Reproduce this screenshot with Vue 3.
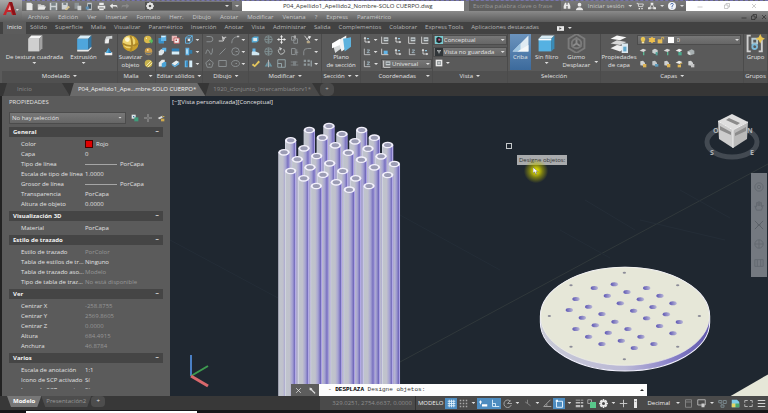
<script setup>
import { h, ref } from 'vue'

/* Icon shapes on a 12 x 12 grid: [path, fill, stroke] */
const W = '#e9e9e9'
const B = '#62b5e8'
const D = '#2f7fb5'
const G = '#8f9496'
const Y = '#e8c553'
const shapes = {
  file: [['M2 1H8L10 3V11H2Z', W]],
  open: [['M1 3H5L6 4H10V10H1Z', '#cfcfcf'], ['M3 6H12L10 10H1Z', W]],
  save: [['M1 1H11V11H1Z', '#cfd3d6'], ['M3 1H9V5H3Z M3 7H9V11H3Z', '#7c8488']],
  saveas: [['M1 1H9V10H1Z', '#cfd3d6'], ['M3 1H7V4H3Z', '#7c8488'], ['M5 10L10 5L12 7L7 11Z', '#d6c48e']],
  cloud: [['M2 1H8V9H2Z', '#8d9397'], ['M6 5H11V11H6Z', '#d0d4d6']],
  publish: [['M3 1H9V11H3Z', '#c4c9cc'], ['M4 3H8V9H4Z', '#4d5b66'], ['M1 6H5V10H1Z', '#5d8fb4']],
  plot: [['M3 1H9V4H3Z M1 5H11V9H1Z M3 9H9V11H3Z', W], ['M3 8H9', 'none', '#666']],
  undo: [['M5 2L1 5L5 9V6H9Q11 6 11 9V5Q11 4 9 4H5Z', W]],
  redo: [['M7 2L11 5L7 9V6H3Q1 6 1 9V5Q1 4 3 4H7Z', '#8a8a8a']],
  gear: [['M5 0H7V2L9 1L11 3L10 5H12V7H10L11 9L9 11L7 10V12H5V10L3 11L1 9L2 7H0V5H2L1 3L3 1L5 2Z M6 4A2 2 0 1 0 6 8A2 2 0 1 0 6 4Z', W]],
  cubeWhite: [['M2 3L4 1H11L9 3Z', '#f4f4f4'], ['M2 3H9V11H2Z', '#cfcfcf'], ['M9 3L11 1V9L9 11Z', '#a2a2a2']],
  cubeBlue: [['M2 3L4 1H11L9 3Z', '#d9edf7'], ['M2 3H9V10H2Z', '#4fa6dc'], ['M9 3L11 1V8L9 10Z', '#2f76a5'], ['M2 10H9L11 8V9L9 11H2Z', W]],
  page: [['M3 2L11 1V5H7L6 11H1V7Z', '#cfd2d3'], ['M3 6L7 5L6 11H1Z', '#eee']],
  pull: [['M1 7H11V11H1Z', '#eee'], ['M2 8L6 1L10 8Z', '#55b3e2'], ['M6 1L10 8H6Z', D]],
  ball: [['M6 1A5 5 0 1 0 6 11A5 5 0 1 0 6 1Z', '#c99f2c'], ['M5 1A4 4 0 1 0 5 9A4 4 0 1 0 5 1Z', '#eed46f'], ['M1 6Q6 9 11 6M6 1Q8 6 6 11', 'none', '#ad882a'], ['M4 2A1 1 0 1 0 4 5A1 1 0 1 0 4 2Z', '#fff7cf']],
  ballPlus: [['M5 1A5 5 0 1 0 5 11A5 5 0 1 0 5 1Z', '#d9b94b'], ['M3 3A1 1 0 1 0 4 5Z', '#fff7cf'], ['M7 7H9V5H11V7H12V9H11V11H9V9H7Z', '#55b95d']],
  ballMinus: [['M6 1A5 5 0 1 0 6 11A5 5 0 1 0 6 1Z', '#c99b4a'], ['M1 7Q6 9 11 7L9 10H3Z', '#6f7678'], ['M4 3H6V5H4Z', '#fff0bb']],
  ballSlash: [['M6 1A5 5 0 1 0 6 11A5 5 0 1 0 6 1Z', '#c9b44e'], ['M3 9L9 3M5 11L11 5', 'none', '#f8efbe']],
  union: [['M4 1H11V8H8V11H1V4H4Z', B], ['M4 1H11L9 3H5Z', '#d6effb'], ['M1 4H4V8H8V11H1Z', '#398fc5']],
  subtract: [['M1 1H8V8H1Z', '#e7b6b6'], ['M4 4H11V11H4Z', '#f1f1f1', '#c15a5a'], ['M6 6H8V8H6Z', '#b44']],
  intersect: [['M2 4L5 1H11V8L8 11H2Z', 'none', B], ['M2 4H8V11M8 4L11 1', 'none', B], ['M5 5H8V8H5Z', W]],
  slice: [['M1 6L4 3H8V8L5 11H1Z', '#dfe5e8'], ['M6 1H11V6H8V4H5Z', B]],
  thick: [['M1 2H11V6H1Z', D], ['M1 6H11V10H1Z', '#d7edf7']],
  extract: [['M2 1H7V11H2Z', B], ['M7 4H11V9H7Z', '#337daa'], ['M3 3H5V9H3Z', '#c8e9f8']],
  offset: [['M1 5L5 1H9V6L5 10H1Z', '#e6e8e8'], ['M5 6L8 4H11V9L9 11H5Z', '#4aa3d6']],
  disc: [['M1 6L7 2L11 4L5 9Z', '#e8eff2'], ['M1 6L5 9L11 4V7L5 11L1 8Z', B]],
  split: [['M1 2H5V11H1Z', B], ['M7 2H11V11H7Z', '#d6edf8'], ['M3 3H5V10H3Z', D]],
  pline: [['M2 2H7A3 3 0 0 1 7 9H2', 'none', G]],
  polysolid: [['M1 8H7L9 3H11', 'none', '#d8d8d8'], ['M5 1L9 4L6 7Z', '#c6c6c6']],
  arc: [['M1 11Q1 3 9 2', 'none', G], ['M8 1H11V3H8Z', '#c6c6c6']],
  spline: [['M1 9Q3 1 5 5T8 10Q10 9 10 2', 'none', G]],
  line: [['M2 10L10 2', 'none', G]],
  circle: [['M6 1A5 5 0 1 0 6 11A5 5 0 1 0 6 1ZM6 6H9', 'none', G]],
  polygon: [['M6 1L11 5L9 11H3L1 5Z', 'none', G], ['M5 6H7V8H5Z', G]],
  rect: [['M1 2H11V10H1Z', 'none', G]],
  ellipse: [['M6 2C-1 2-1 10 6 10S13 2 6 2M6 6H8', 'none', G]],
  gizmoMove: [['M1 4L4 2H10V8L7 10H1Z', '#58acd6'], ['M3 4H8V8H3Z', '#dbe7ec']],
  align: [['M1 7Q3 3 6 6L11 8V11H1Z', '#d1e6f0'], ['M2 2H6V6H2Z', B]],
  sweep: [['M1 8L3 6L5 8L10 2L12 4L5 11Z', '#e4c65c']],
  orbit: [['M6 1A5 5 0 1 0 6 11A5 5 0 1 0 6 1ZM1 6H11M6 1V11M3 3Q6 6 9 3M3 9Q6 6 9 9', 'none', '#7e8d90']],
  move: [['M6 1V11M1 6H11', 'none', W], ['M6 0L8 3H4ZM6 12L8 9H4ZM0 6L3 4V8ZM12 6L9 4V8Z', W]],
  copy: [['M2 2H7V7H2ZM5 5H10V11H5Z', 'none', G], ['M8 1A2 2 0 1 0 8 4Z', '#aaa']],
  trim: [['M2 1L9 10M4 6L9 2', 'none', '#d0d0d0'], ['M7 1L11 2L8 6Z', W], ['M5 8H9V11H5Z', '#b8a886']],
  rotate: [['M9 3A4 4 0 1 1 4 2', 'none', '#c6c9ca'], ['M3 0L7 2L4 5Z', '#c6c9ca']],
  stretch: [['M2 2H7V10H2ZM7 7H11M9 3V11', 'none', G]],
  fillet: [['M1 11V6Q1 2 6 2H11', 'none', G]],
  mirror: [['M1 10L5 3V10ZM7 3L11 10H7Z', '#6b97a5'], ['M6 1V11', 'none', '#bbb']],
  scale: [['M1 1H11V11H1ZM1 6H6V11', 'none', '#97a9ae']],
  erase: [['M1 4H10M1 8H11', 'none', '#82898b'], ['M4 3H8V9H4Z', '#7b8183']],
  array: [['M1 1H4V4H1ZM6 1H9V4H6ZM1 6H4V9H1ZM6 6H9V9H6ZM10 2H12V10H10Z', '#8e989b']],
  section: [['M1 8L6 4V9L2 12Z', '#d7dadb'], ['M4 4L9 1V9L6 11Z', '#f3f3f3'], ['M7 3L12 2V8L8 11Z', '#5eb2dd'], ['M0 6L5 3V7L0 9Z', '#fff']],
  ucs: [['M3 2V9H10', 'none', W], ['M3 1L5 4H1ZM11 9L8 7V11Z', W], ['M6 3H9V5H6Z', '#8fc3dd']],
  ucsBox: [['M1 1V11H11', 'none', W], ['M4 2H11V8H4Z', '#c8d0d3'], ['M5 4H10V6H5Z', '#6e777b']],
  ucsBlue: [['M1 1V10H11', 'none', W], ['M4 4H10V9H4Z', B]],
  ucsZ: [['M2 1V10H11', 'none', '#cfd2d3'], ['M6 3H10L6 7H10', 'none', '#a9c4d0']],
  view: [['M1 1H11V11H1Z', W], ['M3 3H9V9H3Z', '#9aa0a2'], ['M5 5H7V7H5Z', W]],
  conceptual: [['M0 0H12V12H0Z', '#79cbd0'], ['M2 3L5 1L10 3V9L6 11L2 9Z', '#20272b'], ['M5 4H8V7H5Z', '#cf5a8d']],
  named: [['M0 0H12V12H0Z', '#303538'], ['M3 3H9L6 9Z', '#cfd3d4'], ['M6 3V10', 'none', '#3b4144']],
  cull: [['M1 11L11 1V11Z', '#dfeaf2'], ['M1 11L6 6V11Z', '#9fc5e1'], ['M4 11L11 7V11Z', '#f5f7f8']],
  filter: [['M1 3L3 1H11L9 3Z', '#d6eaf3'], ['M1 3H9V11H1Z', '#55b1e2'], ['M9 3L11 1V9L9 11Z', '#398bb7'], ['M1 3H9V4H1Z', '#fff']],
  gizmo: [['M6 0L11 3V9L6 12L1 9V3Z', 'none', '#7b7b7b'], ['M6 2V6L3 8M6 6L9 8', 'none', '#8c8c8c'], ['M6 3A3 3 0 1 0 6 9A3 3 0 1 0 6 3Z', 'none', '#7b7b7b']],
  layers: [['M1 3L5 1L11 2L7 4Z', '#f6f6f6'], ['M1 6L5 4L11 5L7 7Z', '#d7d7d7'], ['M1 9L5 7L11 8L7 11Z', '#eee'], ['M8 6H12V12H8Z', '#dbe8ef'], ['M9 8H11V11H9Z', '#63a9cd']],
  bulb: [['M6 1A4 4 0 0 0 4 8V11H8V8A4 4 0 0 0 6 1Z', Y], ['M5 9H7V11H5Z', '#eee']],
  sun: [['M6 1L8 3L11 3L10 6L11 9L8 9L6 11L4 9L1 9L2 6L1 3L4 3Z', '#edbf4d']],
  lock: [['M1 5H8V11H1Z', '#e6bd56'], ['M7 6V2H10V5', 'none', '#e6bd56']],
  layG: [['M1 4L6 1L11 3L7 6Z', '#d8d8d8'], ['M6 6H8V11H6Z', '#5bb894']],
  layB: [['M2 3L6 1L10 3V7L6 9L2 7Z', '#cad0d0'], ['M7 6H10V11H7Z', '#56a49b']],
  layL: [['M1 4L6 1L11 3L7 6Z', '#ececec'], ['M5 6H10V11H5Z', '#4ba98e']],
  layY: [['M2 2L6 1L9 4V9L2 8Z', '#d0d2d2'], ['M6 6H11V11H6Z', '#dcb355']],
  layC: [['M2 2L6 1L9 4V9L2 8Z', '#c5cacc'], ['M6 6H11V10H6Z', '#5f9cbd']],
  layS: [['M1 5L7 2L11 4V9L5 11L1 9Z', '#a8b0b2'], ['M1 5L5 7V11L1 9Z', '#dadddd']],
  layU: [['M1 4L6 1L11 3L7 6Z', '#ececec'], ['M4 7H9V11H4Z', '#dcb355'], ['M8 7V5H11', 'none', '#dcb355']],
  layW: [['M2 2L6 1L9 4V9L2 8Z', '#d0d2d2'], ['M6 6H11V11H6Z', '#c4c4c4']],
  group: [['M3 1H1V11H3M9 4H10V11H8', 'none', '#cfcfcf'], ['M4 3H7V6H4Z', 'none', '#b9cbd2'], ['M4 8A1 1 0 1 0 7 8A1 1 0 1 0 4 8Z', 'none', '#7cb9d8'], ['M9 0L10 2L12 3L10 4L9 6L8 4L6 3L8 2Z', Y]],
  binoc: [['M1 10V6L3 1H5V10ZM7 10V1H9L11 6V10ZM5 4H7V6H5Z', W]],
  user: [['M6 1A2 2 0 1 0 6 6A2 2 0 1 0 6 1Z', W], ['M1 11Q2 7 6 7T11 11Z', W]],
  cart: [['M1 2H3L4 7H10L11 3H3', 'none', W], ['M4 9H6V11H4ZM8 9H10V11H8Z', W]],
  share: [['M6 3L2 9H10Z', 'none', W], ['M4 1H8V4H4ZM0 8H4V11H0ZM8 8H12V11H8Z', W]],
  help: [['M6 0A6 6 0 1 0 6 12A6 6 0 1 0 6 0Z', '#f1f4f8'], ['M4 4Q4 2 6 2T8 4Q8 5 6 6V8M6 9V10', 'none', '#3d61a5']],
  minimize: [['M1 8H11', 'none', 'currentColor']],
  restore: [['M1 4H8V11H1ZM4 4V1H11V8H8', 'none', 'currentColor']],
  close: [['M2 2L10 10M10 2L2 10', 'none', 'currentColor']],
  video: [['M0 2H12V10H0Z', W], ['M4 4L8 6L4 8Z', '#555']],
  quick: [['M1 1H7V7H1Z', '#dfe7e9'], ['M5 5H11V11H5Z', '#3f9d7c'], ['M3 3H5V5H3Z', '#3672a0']],
  pick: [['M6 0V12M0 6H12', 'none', '#b4b4b4'], ['M5 5H7V7H5Z', '#555']],
  selpick: [['M1 6L7 3L9 5L4 8Z', '#ddd'], ['M6 7H11V11H6Z', '#cfa94b'], ['M8 1L9 3L12 4L9 5', Y]],
  grid: [['M1 3H11M1 6H11M1 9H11M3 1V11M6 1V11M9 1V11', 'none', '#dff0fb']],
  dots: [['M1 1H3V3H1ZM5 1H7V3H5ZM9 1H11V3H9ZM1 5H3V7H1ZM5 5H7V7H5ZM9 5H11V7H9ZM1 9H3V11H1ZM5 9H7V11H5ZM9 9H11V11H9Z', '#a8a8a8']],
  dyn: [['M2 2V7M0 4H4', 'none', '#fff'], ['M4 7H11V10H4Z', '#fff']],
  ortho: [['M2 1V10H11M2 6H6V10', 'none', '#d8edfb']],
  polar: [['M10 3A5 5 0 1 0 11 8M6 6H12M6 6L10 2', 'none', '#aaa']],
  iso: [['M6 1V6L10 9M6 6L3 4', 'none', '#888']],
  track: [['M10 1L1 10H11', 'none', '#aaa'], ['M4 7H6V9H4Z', '#888']],
  osnap: [['M2 3H10V11H2Z', 'none', '#e9f6ff'], ['M1 1H4V4H1Z', '#e9f6ff']],
  weight: [['M1 1H11V2H1ZM1 4H11V6H1ZM1 8H11V11H1Z', '#bcbcbc'], ['M7 0H8V12H7Z', '#4c4c4c']],
  cycle: [['M1 1H6V6H1Z', 'none', '#aaa'], ['M4 4H12V12H4Z', '#58c78b']],
  plus: [['M6 1V11M1 6H11', 'none', '#d0d0d0']],
  bar: [['M4 0H8V12H4Z', '#e8e8e8'], ['M5 3H7V4H5Z', '#777']],
  calc: [['M2 1H10V11H2ZM2 4H10', 'none', '#888']],
  panel: [['M1 1H11V8H1Z', 'none', '#bbb'], ['M6 6H10V11H6Z', '#ccc']],
  iso2: [['M1 2H5V5H1ZM7 2H11V6H7ZM4 8H8V11H4ZM3 5L6 8', 'none', '#7d8c92']],
  perf: [['M1 1H8L11 4V11H1Z', '#7fcbe8'], ['M1 6H6V11H1Z', '#e3d464'], ['M6 6H11V11H6Z', '#4aa86c']],
  full: [['M1 5V2H5M7 10H11V7M1 7V10H5M8 2H11V5', 'none', '#bbb']],
  menu: [['M1 2H11M1 6H11M1 10H11', 'none', '#e2e2e2']],
  wrench: [['M1 1L5 2L6 5L11 10L10 12L4 6L1 5Z', '#ddd']],
  wheel: [['M6 1A5 5 0 1 0 6 11A5 5 0 1 0 6 1ZM6 4A2 2 0 1 0 6 8A2 2 0 1 0 6 4Z', 'none', '#646a71']],
  pan: [['M3 11L1 6L3 7V2H5V6V1H7V6V2H9V7L11 5L9 11Z', 'none', '#646a71']],
  zoomx: [['M1 1L11 11M11 1L1 11M4 6H8', 'none', '#5c6269']],
  orbitNav: [['M6 1A5 5 0 1 0 6 11A5 5 0 1 0 6 1ZM1 6H11M6 1V11', 'none', '#646a71']],
  show: [['M1 2H11V10H1ZM4 2V10M8 2V10', 'none', '#646a71']],
}
const Icon = (p) =>
  h(
    'svg',
    { viewBox: '0 0 12 12', width: p.s || 9, height: p.s || 9, 'aria-hidden': 'true' },
    (shapes[p.n] || []).map(([d, fill, stroke]) =>
      h('path', { d, fill, stroke: stroke || 'none', 'stroke-width': 1.2, 'fill-rule': 'evenodd' }),
    ),
  )
Icon.props = ['n', 's']

const menus = ['Archivo', 'Edición', 'Ver', 'Insertar', 'Formato', 'Herr.', 'Dibujo', 'Acotar', 'Modificar', 'Ventana', '?', 'Express', 'Paramétrico']
const tabs = ['Inicio', 'Sólido', 'Superficie', 'Malla', 'Visualizar', 'Paramétrico', 'Inserción', 'Anotar', 'Vista', 'Administrar', 'Salida', 'Complementos', 'Colaborar', 'Express Tools', 'Aplicaciones destacadas']
const quick = ['file', 'open', 'save', 'saveas', 'cloud', 'publish', 'plot', 'undo', 'redo']

const solids = ['union', 'subtract', 'intersect', 'slice', 'thick', 'extract', 'offset', 'disc', 'split']
const draws = ['pline', 'polysolid', 'arc', 'spline', 'line', 'circle', 'polygon', 'rect', 'ellipse']
const modify = ['gizmoMove', 'orbit', 'move', 'copy', 'trim', 'align', 'orbit', 'rotate', 'stretch', 'fillet', 'sweep', 'mirror', 'scale', 'erase', 'array']
const coords = ['ucs', 'v', 'ucsBox', 'ucs', 'ucsBox', 'ucsBox', 'ucsZ', 'v', 'ucsBlue', 'ucs', 'ucsZ', 'ucs']
const layerTools = ['layG', 'layB', 'layG', 'layL', 'layS', 'layY', 'layC', 'layY', 'layU', 'layW']

const layer = ref('0')

const sections = [
  {
    title: 'General',
    rows: [
      ['Color', 'Rojo', 'swatch'],
      ['Capa', '0'],
      ['Tipo de línea', 'PorCapa', 'line'],
      ['Escala de tipo de línea', '1.0000'],
      ['Grosor de línea', 'PorCapa', 'line'],
      ['Transparencia', 'PorCapa'],
      ['Altura de objeto', '0.0000'],
    ],
  },
  { title: 'Visualización 3D', rows: [['Material', 'PorCapa']] },
  {
    title: 'Estilo de trazado',
    rows: [
      ['Estilo de trazado', 'PorColor', 'dim'],
      ['Tabla de estilos de tr...', 'Ninguno'],
      ['Tabla de trazado aso...', 'Modelo', 'dim'],
      ['Tipo de tabla de traz...', 'No está disponible', 'dim'],
    ],
  },
  {
    title: 'Ver',
    rows: [
      ['Centrar X', '-258.8755', 'dim'],
      ['Centrar Y', '2569.8605', 'dim'],
      ['Centrar Z', '0.0000', 'dim'],
      ['Altura', '684.4915', 'dim'],
      ['Anchura', '46.8784', 'dim'],
    ],
  },
  {
    title: 'Varios',
    rows: [
      ['Escala de anotación', '1:1'],
      ['Icono de SCP activado', 'Sí'],
      ['Icono de SCP en orig...', 'Sí'],
    ],
  },
]

/* Rim centres of the tubes, back to front, in model units (3 per pixel) */
const tubes = [
  [192, 33], [133, 45], [290, 45], [231, 57], [172, 68], [328, 68], [77, 76], [270, 79],
  [368, 90], [211, 91], [117, 100], [309, 101], [57, 112], [250, 113], [155, 123], [348, 124],
  [97, 133], [289, 134], [194, 145], [388, 147], [135, 157], [328, 157], [77, 168], [233, 168],
  [174, 179], [368, 180], [116, 190], [272, 190], [214, 202], [154, 213], [312, 213], [253, 224],
]
const holes = [
  [283, 88], [223, 99], [380, 99], [321, 111], [262, 122], [420, 122], [168, 132], [361, 133],
  [301, 145], [459, 145], [206, 155], [399, 156], [148, 165], [341, 167], [246, 177], [439, 178],
  [187, 188], [380, 190], [285, 200], [478, 201], [226, 211], [419, 213], [168, 222], [324, 222],
  [265, 233], [459, 235], [206, 245], [363, 245], [304, 257], [246, 267], [402, 267], [343, 279],
]
const bolts = [[313, 53], [153, 91], [473, 91], [88, 183], [538, 183], [153, 275], [473, 275], [313, 313]]

/* Status bar toggles: icon name, or 'v' for a drop-down arrow */
const toggles = ['grid!', 'dots', 'v', 'dyn!', 'ortho!', 'polar', 'v', 'iso', 'v', 'track', 'osnap!', 'v', 'weight', 'cycle', 'gear', 'v', 'plus', 'bar']
const toggles2 = ['calc', 'panel', 'v', 'iso2', 'perf', 'full', 'menu']
</script>

<template>
  <div class="app">
    <header class="head">
      <button class="logo" aria-label="Menú de la aplicación">
        <svg viewBox="0 0 22 20" width="22" height="20">
          <path d="M3 14L9 1H12L16 14H12L11 11H7L6 14Z" fill="#c3262c" />
          <path d="M9 1H12L16 14H13Z" fill="#8c1318" />
          <path d="M8 9L10 4L11 9Z" fill="#eaa" />
          <path d="M16 8H19L17 10Z" fill="#ddd" />
        </svg>
      </button>
      <div class="bars">
        <div class="titlebar">
          <div class="quick">
            <button v-for="(q, i) in quick" :key="i" :aria-label="q"><Icon :n="q" :s="9" /></button>
            <button class="workspace" aria-label="Espacio de trabajo"><Icon n="gear" :s="8" /><i class="caret"></i></button>
            <button aria-label="Personalizar"><i class="caret"></i></button>
          </div>
          <div class="doc">P04_Apellido1_Apellido2_Nombre-SOLO CUERPO.dwg</div>
          <input class="search" aria-label="Buscar" placeholder="Escriba palabra clave o frase" />
          <div class="account">
            <Icon n="binoc" :s="8" /><Icon n="user" :s="9" /><a href="#">Iniciar sesión</a>
            <i class="caret"></i><Icon n="cart" :s="8" /><Icon n="share" :s="8" /><i class="caret"></i>
            <Icon n="help" :s="8" /><i class="caret"></i>
          </div>
          <div class="winctl">
            <button aria-label="Minimizar"><Icon n="minimize" :s="6" /></button>
            <button aria-label="Maximizar"><Icon n="restore" :s="6" /></button>
            <button aria-label="Cerrar"><Icon n="close" :s="6" /></button>
          </div>
        </div>
        <nav class="menubar">
          <a v-for="m in menus" :key="m" href="#">{{ m }}</a>
          <span class="docctl"><Icon n="minimize" :s="6" /><Icon n="restore" :s="6" /><Icon n="close" :s="6" /></span>
        </nav>
      </div>
    </header>

    <nav class="tabs">
      <a v-for="(t, i) in tabs" :key="t" href="#" :class="{ on: i === 0 }">{{ t }}</a>
      <button aria-label="Opciones de la cinta"><Icon n="video" :s="7" /><i class="caret"></i></button>
    </nav>

    <div class="ribbon">
      <section class="panel">
        <div class="tools around">
          <button class="big"><Icon n="cubeWhite" :s="19" /><span>De textura cuadrada</span><i class="caret"></i></button>
          <button class="big"><Icon n="cubeBlue" :s="19" /><span>Extrusión</span><i class="caret"></i></button>
          <div class="col"><Icon n="page" /><Icon n="pull" /></div>
        </div>
        <h2>Modelado<i class="caret"></i></h2>
      </section>
      <section class="panel">
        <div class="tools around">
          <button class="big"><Icon n="ball" :s="19" /><span>Suavizar<br />objeto</span></button>
          <div class="col"><Icon n="ballPlus" /><Icon n="ballMinus" /><Icon n="ballSlash" /></div>
        </div>
        <h2 class="wide"><span>Malla</span><i class="caret"></i></h2>
      </section>
      <section class="panel">
        <div class="tools">
          <div class="grid3"><Icon v-for="s in solids" :key="s" :n="s" /></div>
          <div class="carets"><i class="caret"></i><i class="caret"></i><i class="caret"></i></div>
        </div>
        <h2>Editar sólidos<i class="caret"></i></h2>
      </section>
      <section class="panel">
        <div class="tools">
          <div class="grid3"><Icon v-for="s in draws" :key="s" :n="s" /></div>
          <div class="carets"><i class="caret"></i><i class="caret"></i><i class="caret"></i></div>
        </div>
        <h2>Dibujo<i class="caret"></i></h2>
      </section>
      <section class="panel">
        <div class="tools">
          <div class="grid5"><Icon v-for="(s, i) in modify" :key="i" :n="s" /></div>
          <div class="carets"><i class="caret"></i><i class="caret"></i><i class="caret"></i></div>
        </div>
        <h2>Modificar<i class="caret"></i></h2>
      </section>
      <section class="panel">
        <div class="tools around">
          <button class="big"><Icon n="section" :s="19" /><span>Plano<br />de sección</span></button>
        </div>
        <h2>Sección<i class="caret"></i><i class="caret"></i></h2>
      </section>
      <section class="panel">
        <div class="stack">
          <div class="ucsgrid">
            <template v-for="(s, i) in coords" :key="i"><i v-if="s === 'v'" class="caret"></i><Icon v-else :n="s" :s="8" /></template>
          </div>
          <div class="row">
            <Icon n="ucsZ" :s="8" /><i class="caret"></i>
            <label class="combo"><Icon n="ucsBox" :s="8" /><select aria-label="SCP"><option>Universal</option></select><i class="caret"></i></label>
          </div>
        </div>
        <h2 class="wide"><span>Coordenadas</span><i class="caret"></i></h2>
      </section>
      <section class="panel">
        <div class="stack">
          <label class="combo"><Icon n="conceptual" :s="8" /><select aria-label="Estilo visual"><option>Conceptual</option></select><i class="caret"></i></label>
          <label class="combo"><Icon n="named" :s="8" /><select aria-label="Vista"><option>Vista no guardada</option></select><i class="caret"></i></label>
          <div class="row"><Icon n="view" :s="8" /><i class="caret"></i></div>
        </div>
        <h2>Vista<i class="caret"></i></h2>
      </section>
      <section class="panel">
        <div class="tools around">
          <button class="big on"><Icon n="cull" :s="19" /><span>Criba</span></button>
          <button class="big"><Icon n="filter" :s="19" /><span>Sin filtro</span><i class="caret"></i></button>
          <button class="big"><Icon n="gizmo" :s="19" /><span>Gizmo<br />Desplazar</span></button>
          <i class="caret"></i>
        </div>
        <h2>Selección</h2>
      </section>
      <section class="panel">
        <div class="tools">
          <button class="big"><Icon n="layers" :s="19" /><span>Propiedades<br />de capa</span></button>
          <div class="stack fill">
            <label class="combo">
              <Icon n="bulb" :s="8" /><Icon n="sun" :s="8" /><Icon n="lock" :s="8" /><b class="white"></b>
              <select v-model="layer" aria-label="Capa"><option>0</option></select><i class="caret"></i>
            </label>
            <div class="layergrid"><Icon v-for="(s, i) in layerTools" :key="i" :n="s" :s="8" /></div>
          </div>
        </div>
        <h2>Capas<i class="caret"></i></h2>
      </section>
      <section class="panel">
        <div class="tools around"><button class="big"><Icon n="group" :s="19" /><span>Grupo</span></button></div>
        <h2>Grupos</h2>
      </section>
    </div>

    <nav class="docs">
      <a href="#" class="start">Inicio</a>
      <a href="#" class="on">P04_Apellido1_Ape...mbre-SOLO CUERPO*</a>
      <a href="#">1920_Conjunto_Intercambiadorv1*</a>
      <button aria-label="Nuevo dibujo">+</button>
    </nav>

    <main class="work">
      <aside class="palette">
        <h1>PROPIEDADES</h1>
        <div class="pick">
          <label class="combo"><select aria-label="Selección"><option>No hay selección</option></select><i class="caret"></i></label>
          <Icon n="quick" :s="8" /><Icon n="pick" :s="8" /><Icon n="selpick" :s="8" />
        </div>
        <div class="props">
          <section v-for="s in sections" :key="s.title">
            <h3>{{ s.title }}<span>−</span></h3>
            <dl>
              <template v-for="r in s.rows" :key="r[0]">
                <dt>{{ r[0] }}</dt>
                <dd :class="r[2]">{{ r[1] }}</dd>
              </template>
            </dl>
          </section>
        </div>
      </aside>

      <div class="canvas">
        <svg class="scene" viewBox="170 96 598 300" preserveAspectRatio="xMidYMid slice">
          <defs>
            <linearGradient id="tube">
              <stop offset="0" stop-color="#e4e2f4" />
              <stop offset=".08" stop-color="#bfc4cc" />
              <stop offset=".4" stop-color="#c0c1cc" />
              <stop offset=".65" stop-color="#a5a2d2" />
              <stop offset=".88" stop-color="#7068bb" />
              <stop offset=".93" stop-color="#b9b0ea" />
              <stop offset="1" stop-color="#8f85d3" />
            </linearGradient>
            <linearGradient id="edge">
              <stop offset="0" stop-color="#c9cbd6" />
              <stop offset=".5" stop-color="#bbb9d6" />
              <stop offset=".75" stop-color="#8d86cb" />
              <stop offset="1" stop-color="#5f57ab" />
            </linearGradient>
            <linearGradient id="hole">
              <stop offset="0" stop-color="#5d56b4" />
              <stop offset="1" stop-color="#b9b7d6" />
            </linearGradient>
          </defs>
          <g stroke="#2e373f" fill="none">
            <path d="M400 362L768 164" stroke="#30383b" />
            <path d="M585 200L635 230M560 230L610 258M680 190L730 218M170 240L278 298M400 215L500 270M640 220L725 240" stroke="#242d37" />
          </g>
          <g transform="translate(265 115) scale(.3334)">
            <g v-for="(t, i) in tubes" :key="i">
              <rect :x="t[0] - 17" :y="t[1]" width="34" height="900" fill="url(#tube)" />
              <ellipse :cx="t[0]" :cy="t[1]" rx="17" ry="10" fill="#f3f1fc" />
              <ellipse :cx="t[0]" :cy="t[1]" rx="11" ry="6" fill="#9b9cb4" />
            </g>
          </g>
          <g transform="translate(520 255) scale(.3334)">
            <path d="M61 184A254 147 0 0 1 569 184V202A254 146 0 0 1 61 202Z" fill="url(#edge)" stroke="#f4f3ff" stroke-width="3" />
            <ellipse cx="315" cy="184" rx="253" ry="147" fill="#e6e7d8" stroke="#f3f3ea" stroke-width="2" />
            <ellipse v-for="(p, i) in holes" :key="i" :cx="p[0]" :cy="p[1]" rx="11" ry="6" fill="url(#hole)" />
            <ellipse v-for="(p, i) in bolts" :key="'b' + i" :cx="p[0]" :cy="p[1]" rx="5" ry="3" fill="#8c8c98" />
            <path d="M630 424L744 358V424Z" fill="#e6e7d8" />
          </g>
          <g fill="none" stroke-width="2">
            <path d="M191 376V355" stroke="#4a7fc4" />
            <path d="M191 376L208 366" stroke="#3e9b50" />
            <path d="M191 376L208 386" stroke="#d9686c" stroke-width="3" />
          </g>
          <g>
            <ellipse cx="732" cy="142" rx="25" ry="15" fill="none" stroke="#434a52" stroke-width="5" />
            <path d="M718 121L732 114L748 122L733 130Z" fill="#dedede" />
            <path d="M718 121L733 130V148L719 139Z" fill="#cdcdcd" />
            <path d="M748 122L733 130V148L747 139Z" fill="#b9b9b9" />
            <path d="M726 120L729 118L740 123L737 125ZM720 126L731 132V135L720 130ZM735 133L746 127V131L735 136Z" fill="#8b8b8b" />
            <path d="M718 121L733 130L748 122M733 130V148" stroke="#eee" fill="none" />
          </g>
          <g class="compass">
            <text x="710" y="155">S</text><text x="750" y="155">E</text><text x="713" y="133">O</text><text x="747" y="133">N</text>
          </g>
        </svg>
        <p class="viewlabel">[−][Vista personalizada][Conceptual]</p>
        <div class="pickbox"></div>
        <div class="tip">Designe objetos:</div>
        <div class="glow">
          <svg viewBox="0 0 8 10" width="6" height="8"><path d="M0 0V8L2 6L4 10L5 9L4 6H7Z" fill="#fff" stroke="#333" stroke-width=".5" /></svg>
        </div>
        <div class="navbar"><Icon n="wheel" :s="10" /><Icon n="pan" :s="10" /><Icon n="zoomx" :s="10" /><Icon n="orbitNav" :s="10" /><Icon n="show" :s="10" /></div>
        <div class="cmd">
          <button aria-label="Cerrar"><Icon n="close" :s="7" /></button>
          <button aria-label="Personalizar"><Icon n="wrench" :s="7" /></button>
          <p>- <b>DESPLAZA</b> Designe objetos:</p>
          <i class="caret up"></i>
        </div>
      </div>
    </main>

    <footer class="foot">
      <nav class="layouts">
        <a href="#" class="on">Modelo</a><a href="#">Presentación2</a><button aria-label="Nueva presentación">+</button>
      </nav>
      <div class="status">
        <span class="xyz">329.0251, 2754.6637, 0.0000</span>
        <button class="model">MODELO</button>
        <template v-for="(t, i) in toggles" :key="i">
          <i v-if="t === 'v'" class="slot"><i class="caret"></i></i>
          <button v-else class="tog" :class="{ lit: t.endsWith('!') }" :aria-label="t"><Icon :n="t.replace('!', '')" /></button>
        </template>
        <button class="units">Decimal</button><i class="slot"><i class="caret"></i></i>
        <template v-for="(t, i) in toggles2" :key="'r' + i">
          <i v-if="t === 'v'" class="slot"><i class="caret"></i></i>
          <button v-else class="tog roomy" :aria-label="t"><Icon :n="t" /></button>
        </template>
      </div>
    </footer>
    <div class="desk"><span></span></div>
  </div>
</template>

<style>
body {
  margin: 0;
  background: #1d1d1f;
}
</style>

<style scoped>
.app {
  display: flex;
  flex-direction: column;
  height: 100vh;
  overflow: hidden;
  font: 6px/8px 'Open Sans', 'Noto Sans', sans-serif;
  color: #e2e2e2;
  background: #2b2b2b;
}
.app * {
  box-sizing: border-box;
}
button,
select,
input {
  font: inherit;
  color: inherit;
  border: 0;
  padding: 0;
  margin: 0;
  background: none;
  appearance: none;
}
a {
  color: inherit;
  text-decoration: none;
  white-space: nowrap;
}
svg {
  display: block;
  flex: none;
}
h1,
h2,
h3,
p,
dl,
dd {
  margin: 0;
  font: inherit;
}
.caret {
  flex: none;
  width: 4px;
  height: 2px;
  background: #ddd;
  clip-path: polygon(0 0, 100% 0, 50% 100%);
}
.caret.up {
  background: #222;
  clip-path: polygon(50% 0, 100% 100%, 0 100%);
}

/* Title and menu */
.head {
  display: flex;
  background: #6b6b6b;
}
.logo {
  width: 22px;
  height: 22px;
  background: linear-gradient(#a8a8a8, #5c5c5c);
}
.bars {
  flex: 1;
  min-width: 0;
}
.titlebar {
  display: grid;
  grid-template-columns: 220fr 222fr 97fr 125fr 82fr;
  height: 11px;
  border-top: 1px dashed #7573b0;
  background: linear-gradient(#7a7a7a, #666);
}
.titlebar > * {
  min-width: 0;
}
.quick {
  display: flex;
  align-items: center;
  gap: 3px;
  padding-left: 3px;
}
.quick button {
  display: flex;
  align-items: center;
}
.quick .workspace {
  flex: 1;
  justify-content: space-between;
  margin-left: 12px;
  padding: 0 3px 0 1px;
  background: #515151;
}
.quick button:last-child {
  margin-right: 3px;
}
.doc {
  padding-left: 41px;
  overflow: hidden;
  color: #333;
  background: #fff;
  line-height: 10px;
  white-space: nowrap;
}
.search {
  padding-left: 4px;
  border-left: 5px solid #777;
  background: #5f5f5f;
}
.search::placeholder {
  color: #999;
  opacity: 1;
}
.account {
  display: flex;
  align-items: center;
  justify-content: space-around;
  color: #ccc;
}
.winctl {
  display: flex;
  align-items: center;
  justify-content: space-around;
  color: #aaa;
  background: #fff;
}
.menubar {
  display: flex;
  gap: 9px;
  height: 11px;
  padding-left: 6px;
  line-height: 12px;
  color: #c9c9c9;
  background: linear-gradient(#8a8a8a, #5b5b5b);
}
.docctl {
  display: flex;
  gap: 4px;
  align-items: center;
  margin-left: auto;
  padding-right: 1px;
  color: #222;
}

/* Ribbon */
.tabs {
  display: flex;
  height: 12px;
  padding-left: 3px;
  line-height: 11px;
  color: #b6b6b6;
  background: #424242;
}
.tabs a {
  padding: 0 4px;
}
.tabs .on {
  color: #eee;
  background: #5c5c5c;
}
.tabs button {
  display: flex;
  gap: 4px;
  align-items: center;
  margin-left: 14px;
}
.ribbon {
  display: grid;
  grid-template-columns: 116fr 38fr 48fr 46fr 73fr 39fr 72fr 75fr 94fr 143fr 24fr;
  height: 49px;
  padding-left: 2px;
  background: #5a5a5a;
}
.panel {
  display: flex;
  flex-direction: column;
  min-width: 0;
  border-right: 1px solid #4b4b4b;
}
.panel h2 {
  display: flex;
  gap: 3px;
  align-items: center;
  justify-content: center;
  height: 12px;
  padding-bottom: 2px;
  background: #505050;
  white-space: nowrap;
}
.panel h2.wide {
  justify-content: flex-end;
  gap: 10px;
  padding-right: 2px;
}
.tools {
  display: flex;
  flex: 1;
  min-height: 0;
}
.around {
  justify-content: space-around;
}
.big {
  display: flex;
  flex-direction: column;
  align-items: center;
  line-height: 8px;
  white-space: nowrap;
}
.big .caret {
  margin-top: 1px;
}
.big.on {
  margin-bottom: 1px;
  padding: 0 1px;
  background: linear-gradient(#6b93bd, #3c6a9c);
}
.around > .caret {
  margin-top: 27px;
}
.col {
  display: flex;
  flex-direction: column;
  gap: 3px;
  padding-top: 1px;
}
.grid3,
.grid5 {
  display: grid;
  flex: 1;
  grid-template-columns: repeat(3, 1fr);
  gap: 3px 0;
  align-content: start;
  justify-items: center;
  padding-top: 1px;
}
.grid5 {
  grid-template-columns: repeat(5, 1fr);
}
.carets {
  display: flex;
  flex-direction: column;
  gap: 10px;
  padding: 5px 3px 0 0;
}
.stack {
  display: flex;
  flex: 1;
  flex-direction: column;
  gap: 2px;
  min-width: 0;
  padding: 1px 0;
}
.fill {
  padding-right: 2px;
}
.row {
  display: flex;
  gap: 3px;
  align-items: center;
  padding-left: 2px;
}
.row .combo {
  flex: 1;
}
.ucsgrid,
.layergrid {
  display: grid;
  gap: 4px 0;
  align-items: center;
  justify-items: center;
  padding: 1px 0;
}
.ucsgrid {
  grid-template-columns: 12px 5px repeat(4, 1fr);
}
.layergrid {
  justify-content: start;
  grid-template-columns: repeat(5, 12px);
}
.combo {
  display: flex;
  gap: 1px;
  align-items: center;
  min-width: 0;
  height: 10px;
  padding: 0 1px;
  border: 1px solid #4c4c4c;
  background: linear-gradient(#777, #666);
}
.combo select {
  flex: 1;
  min-width: 0;
}
.white {
  width: 6px;
  height: 6px;
  margin: 0 2px;
  background: #fff;
}

/* Drawing tabs */
.docs {
  display: flex;
  height: 13px;
  padding-left: 3px;
  line-height: 13px;
  color: #8c8c8c;
  background: #363636;
}
.docs a {
  padding: 0 9px 0 8px;
  background: #494949;
  clip-path: polygon(4px 0, calc(100% - 8px) 0, 100% 100%, 0 100%);
}
.docs .start {
  padding: 0 38px 0 14px;
}
.docs .on {
  color: #f0f0f0;
  background: #6a6a6a;
}
.docs button {
  width: 14px;
  color: #bbb;
  background: #4a4a4a;
  border-radius: 5px;
}

/* Workspace */
.work {
  display: flex;
  flex: 1;
  min-height: 0;
}
.palette {
  display: flex;
  flex: none;
  flex-direction: column;
  width: 170px;
  padding: 0 7px 7px;
  border-left: 2px solid #222;
  background: #5b5b5b;
}
.palette h1 {
  height: 13px;
  line-height: 13px;
}
.pick {
  display: flex;
  gap: 5px;
  align-items: center;
  height: 18px;
  padding-bottom: 1px;
  margin-right: -2px;
}
.pick .combo {
  flex: 1;
  height: 12px;
  padding: 0 3px 0 2px;
}
.props {
  flex: 1;
  min-height: 0;
  overflow: hidden;
}
.props h3 {
  display: flex;
  justify-content: space-between;
  height: 10px;
  padding: 0 4px;
  line-height: 10px;
  font-weight: 700;
  color: #f3f3f3;
  background: #454545;
}
.props dl {
  display: grid;
  grid-template-columns: 64px 1fr;
  grid-auto-rows: 10px;
  padding: 2px 0 2px 12px;
  line-height: 10px;
  white-space: nowrap;
}
.props dd {
  display: flex;
  gap: 3px;
  align-items: center;
}
.props .dim {
  color: #979797;
}
.swatch::before {
  content: '';
  width: 6px;
  height: 6px;
  border: 1px solid #400;
  background: #e00000;
}
.line::before {
  content: '';
  width: 32px;
  height: 1px;
  background: #a5a5a5;
}
.canvas {
  position: relative;
  flex: 1;
  min-width: 0;
  background: #1f2730;
}
.scene {
  position: absolute;
  inset: 0;
  width: 100%;
  height: 100%;
}
.compass {
  font: 700 7px 'Open Sans', sans-serif;
  fill: #aeb3b6;
}
.viewlabel {
  position: absolute;
  top: 2px;
  left: 2px;
}
.pickbox {
  position: absolute;
  top: 47px;
  left: 336px;
  width: 6px;
  height: 6px;
  border: 1px solid #c5c8ca;
}
.tip {
  position: absolute;
  top: 59px;
  left: 347px;
  padding: 1px 2px;
  color: #333;
  background: #a9abad;
  white-space: nowrap;
}
.glow {
  position: absolute;
  top: 62px;
  left: 353px;
  display: grid;
  place-items: center;
  width: 26px;
  height: 26px;
  background: radial-gradient(circle, #e4e000 8%, #b8b80090 36%, transparent 66%);
}
.navbar {
  position: absolute;
  top: 77px;
  right: 1px;
  display: flex;
  flex-direction: column;
  gap: 9px;
  align-items: center;
  width: 16px;
  padding: 9px 0;
  background: #747980;
}
.cmd {
  position: absolute;
  right: 121px;
  bottom: 0;
  left: 121px;
  display: flex;
  align-items: center;
  height: 12px;
  color: #333;
  background: #fdfdfd;
  font-family: 'Liberation Mono', monospace;
}
.cmd button {
  display: grid;
  place-items: center;
  width: 14px;
  height: 100%;
  color: #eee;
  background: #5d5d5d;
}
.cmd p {
  flex: 1;
  padding-left: 9px;
  color: #333;
}
.cmd b {
  color: #000;
}
.cmd > .caret {
  margin-right: 3px;
}

/* Footer */
.foot {
  display: flex;
  height: 14px;
  background: #383838;
}
.layouts {
  display: flex;
  height: 11px;
  padding-left: 7px;
  line-height: 11px;
}
.layouts a {
  padding: 0 5px;
  color: #999;
  background: #4d4d4d;
  clip-path: polygon(0 0, 100% 0, calc(100% - 4px) 100%, 4px 100%);
}
.layouts .on {
  padding: 0 6px;
  font-weight: 700;
  color: #fff;
  background: #777;
}
.layouts button {
  width: 14px;
  background: #4d4d4d;
  border-radius: 4px;
}
.status {
  display: flex;
  align-items: center;
  margin-left: auto;
  background: #4a4a4a;
}
.xyz {
  padding: 0 3px 0 12px;
  color: #8f8f8f;
}
.model {
  height: 100%;
  padding: 0 2px;
  border-left: 1px solid #333;
  color: #eee;
}
.tog {
  display: grid;
  place-items: center;
  width: 12px;
  height: 11px;
}
.tog.roomy {
  width: 13px;
}
.lit {
  background: #4d8cc0;
}
.slot {
  display: grid;
  place-items: center;
  width: 8px;
}
.units {
  padding: 0 4px 0 6px;
  color: #eee;
}
.desk {
  flex: none;
  height: 3px;
  padding: 1px 0 0 26px;
  background: #17171a;
}
.desk span {
  display: block;
  width: 171px;
  height: 2px;
  background: #fff;
}
</style>
